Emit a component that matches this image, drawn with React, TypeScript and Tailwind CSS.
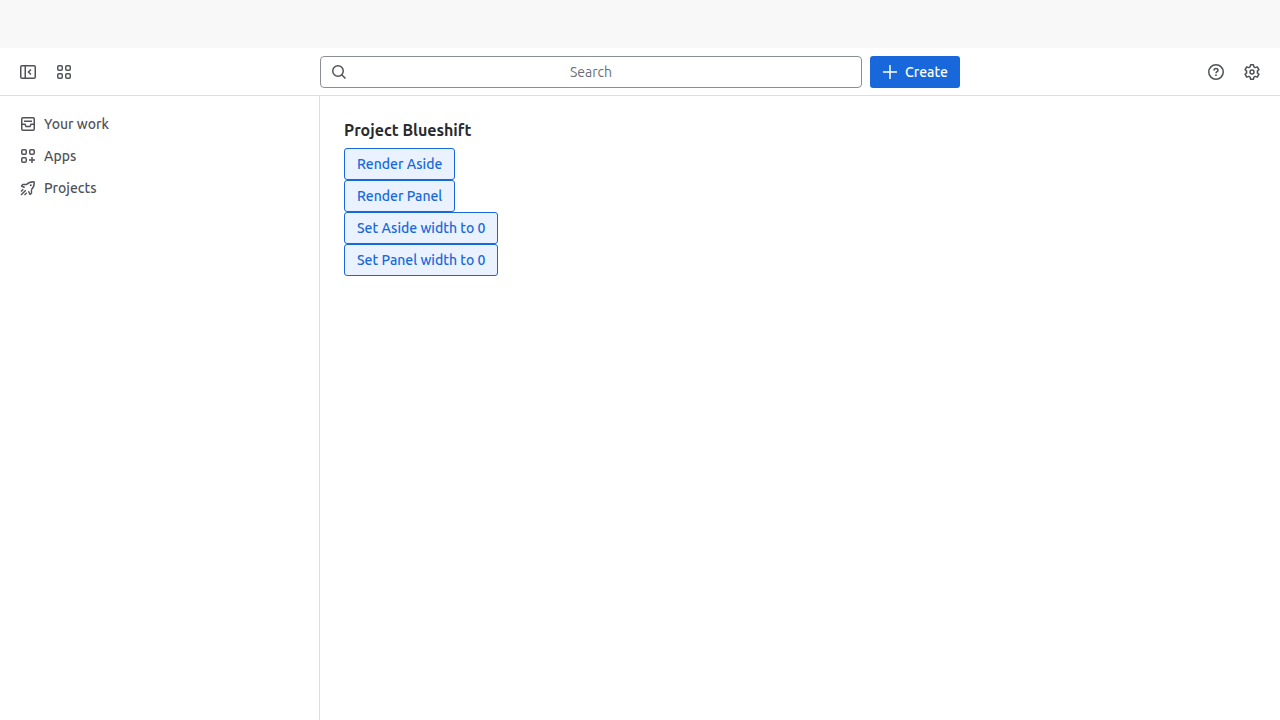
import React from "react";

type IconProps = { children: React.ReactNode };

function Icon({ children }: IconProps) {
  return (
    <svg
      className="size-4 shrink-0"
      viewBox="0 0 16 16"
      fill="none"
      stroke="currentColor"
      strokeWidth="1.5"
      aria-hidden="true"
    >
      {children}
    </svg>
  );
}

const CollapseIcon = () => (
  <Icon>
    <rect x="0.75" y="1.75" width="14.5" height="12.5" rx="1.25" />
    <path d="M5.25 1.75v12.5M11 5.5 8.5 8l2.5 2.5" />
  </Icon>
);

const GridIcon = () => (
  <Icon>
    <rect x="1.75" y="1.75" width="4.5" height="4.5" rx="1.25" />
    <rect x="9.75" y="1.75" width="4.5" height="4.5" rx="1.25" />
    <rect x="1.75" y="9.75" width="4.5" height="4.5" rx="1.25" />
    <rect x="9.75" y="9.75" width="4.5" height="4.5" rx="1.25" />
  </Icon>
);

const SearchIcon = () => (
  <Icon>
    <circle cx="7" cy="7" r="5.25" />
    <path d="m10.75 10.75 3.75 3.75" />
  </Icon>
);

const PlusIcon = () => (
  <Icon>
    <path d="M8 1v14M1 8h14" />
  </Icon>
);

const HelpIcon = () => (
  <Icon>
    <circle cx="8" cy="8" r="7.25" />
    <path d="M6 6.5C6 5.3 6.9 4.6 8 4.6s2 .7 2 1.8C10 7.7 8 7.7 8 9.3" />
    <circle cx="8" cy="11.2" r="0.9" fill="currentColor" stroke="none" />
  </Icon>
);

const SettingsIcon = () => (
  <Icon>
    <path
      strokeLinejoin="round"
      d="M6.6 .75h2.8l.5 2.1 1.3 .75 2.1-.6 1.6 2.6L13.4 7.1v1.8l1.5 1.5-1.6 2.6-2.1-.6-1.3 .75-.5 2.1H6.6l-.5-2.1-1.3-.75-2.1 .6-1.6-2.6L2.6 8.9V7.1L1.1 5.6 2.7 3l2.1 .6 1.3-.75z"
    />
    <circle cx="8" cy="8" r="2" />
  </Icon>
);

const InboxIcon = () => (
  <Icon>
    <rect x="1.75" y="1.75" width="12.5" height="12.5" rx="1.25" />
    <path d="M4 5.25h8M1.75 8.25H5l1 2.25h4l1-2.25h3.25" />
  </Icon>
);

const AppsIcon = () => (
  <Icon>
    <rect x="1.75" y="1.75" width="4.5" height="4.5" rx="1.25" />
    <rect x="9.75" y="1.75" width="4.5" height="4.5" rx="1.25" />
    <rect x="1.75" y="9.75" width="4.5" height="4.5" rx="1.25" />
    <path d="M12 9v6M9 12h6" />
  </Icon>
);

const RocketIcon = () => (
  <Icon>
    <path
      strokeWidth="1.4"
      strokeLinejoin="round"
      d="M6.5 4.5C8.5 2.3 10.5 1.75 13.5 1.75a.75.75 0 0 1 .75.75c0 3-.55 5-2.75 7M6.5 4.5H2.75L1.5 6l3.2 1.5M11.500 9.500v3.750L10 14.500l-1.500-3.200M5.750 10.250 1 15M3.250 9.250 1 11.500M6.750 12.750 4.500 15"
    />
    <circle cx="10.75" cy="5.25" r="1" fill="currentColor" stroke="none" />
  </Icon>
);

function IconButton({ label, children }: { label: string; children: React.ReactNode }) {
  return (
    <button
      type="button"
      aria-label={label}
      className="flex size-8 items-center justify-center rounded-[3px] hover:bg-gray-100"
    >
      {children}
    </button>
  );
}

const navItems = [
  { label: "Your work", icon: <InboxIcon /> },
  { label: "Apps", icon: <AppsIcon /> },
  { label: "Projects", icon: <RocketIcon /> },
];

const actions = ["Render Aside", "Render Panel", "Set Aside width to 0", "Set Panel width to 0"];

export default function App() {
  return (
    <div className="flex min-h-screen flex-col bg-white font-[Ubuntu,'Noto_Sans',sans-serif] text-sm leading-5 text-[#505258]">
      <div className="h-12 bg-[#f8f8f8]" />
      <header className="flex h-12 items-center border-b border-[#dddee1]">
        <div className="flex flex-1 gap-1 px-3">
          <IconButton label="Collapse sidebar">
            <CollapseIcon />
          </IconButton>
          <IconButton label="Switch apps">
            <GridIcon />
          </IconButton>
        </div>
        <div className="flex w-1/2 gap-2">
          <label className="relative flex flex-1">
            <span className="pointer-events-none absolute inset-y-0 left-[11px] flex items-center">
              <SearchIcon />
            </span>
            <input
              type="text"
              aria-label="Search"
              placeholder="Search"
              className="h-8 w-full rounded border border-[#8c8f97] px-9 text-center placeholder:text-[#6b6e76]"
            />
          </label>
          <button
            type="button"
            className="flex h-8 items-center gap-[7px] rounded-[3px] bg-[#1868db] px-3 font-medium text-white"
          >
            <PlusIcon />
            Create
          </button>
        </div>
        <div className="flex flex-1 justify-end gap-1 px-3">
          <IconButton label="Help">
            <HelpIcon />
          </IconButton>
          <IconButton label="Settings">
            <SettingsIcon />
          </IconButton>
        </div>
      </header>
      <div className="flex flex-1">
        <nav className="w-80 shrink-0 border-r border-[#dddee1] p-3">
          <ul>
            {navItems.map((item) => (
              <li key={item.label}>
                <a href="#" className="flex h-8 items-center gap-2 rounded-[3px] px-2 font-medium hover:bg-gray-100">
                  {item.icon}
                  {item.label}
                </a>
              </li>
            ))}
          </ul>
        </nav>
        <main className="flex flex-1 flex-col items-start p-6">
          <h1 className="mb-2 text-base leading-5 font-bold text-[#292a2e]">Project Blueshift</h1>
          {actions.map((action) => (
            <button
              key={action}
              type="button"
              className="h-8 rounded-[3px] border border-[#1868db] bg-[#e9f2fe] px-3 font-medium text-[#1868db]"
            >
              {action}
            </button>
          ))}
        </main>
      </div>
    </div>
  );
}
